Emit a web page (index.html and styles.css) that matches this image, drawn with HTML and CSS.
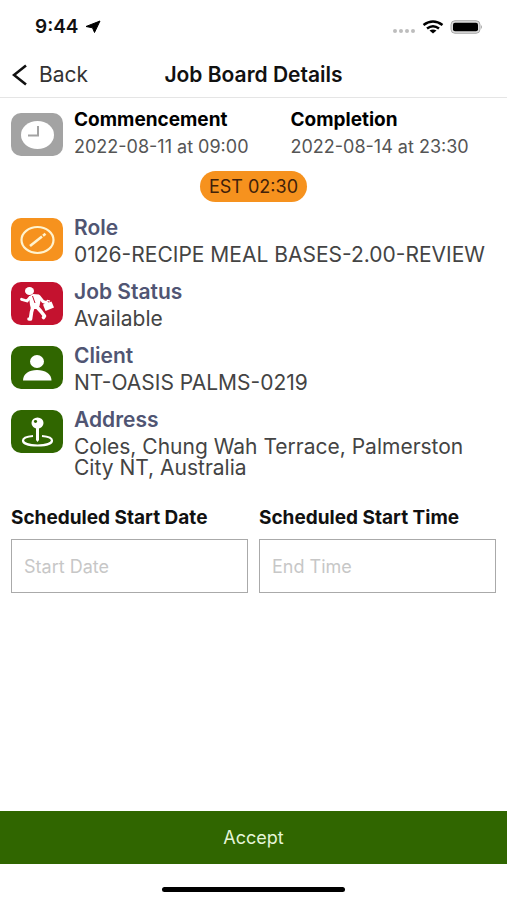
FILE: index.html
```
<!DOCTYPE html>
<html lang="en">
<head>
<meta charset="utf-8">
<meta name="viewport" content="width=device-width, initial-scale=1">
<title>Job Board Details</title>
<link rel="stylesheet" href="styles.css">
</head>
<body>
<div class="screen">
  <div class="status">
    <div class="status-left">
      <span class="clock">9:44</span>
      <svg width="16" height="14" viewBox="0 0 16 14" aria-hidden="true"><path d="M15 1 9.500 12.500 7.500 7.800 1 6.500Z" stroke="#000" stroke-linejoin="round"/></svg>
    </div>
    <div class="status-right">
      <svg width="24" height="6" viewBox="0 0 24 6" fill="#bdbdbd" aria-hidden="true"><circle cx="3" cy="3" r="2"/><circle cx="9" cy="3" r="2"/><circle cx="15" cy="3" r="2"/><circle cx="21" cy="3" r="2"/></svg>
      <svg class="wifi" width="22" height="14" viewBox="0 0 22 14" fill="none" stroke="#000" stroke-width="2.500" aria-hidden="true"><path d="M1.500 5Q11-2 20.500 5M5 8.500Q11 4 17 8.500"/><path d="M7.500 10.500Q11 8.300 14.500 10.500L11 13.500Z" fill="#000" stroke="none"/></svg>
      <svg width="33" height="14" viewBox="0 0 33 14" aria-hidden="true"><rect x="1" y=".7" width="29" height="12.600" rx="4" fill="#ddd" stroke="#aaa"/><rect x="3" y="2.800" width="25" height="8.400" rx="2"/><path d="M31 5Q33 7 31 9Z" fill="#aaa"/></svg>
    </div>
  </div>
  <header class="nav">
    <button class="back" type="button">
      <svg width="16" height="22" viewBox="0 0 16 22" fill="none" stroke="#111" stroke-width="2.600" aria-hidden="true"><path d="M14 1.500 2 11l12 9.500"/></svg>
      Back
    </button>
    <h1>Job Board Details</h1>
  </header>
  <main>
    <section class="row times">
      <svg class="tile" viewBox="0 0 52 43" aria-hidden="true"><rect width="52" height="43" rx="10" fill="#a3a3a3"/><ellipse cx="26.500" cy="22" rx="16.500" ry="14" fill="#fff"/><path d="M27 13v9.500H17" fill="none" stroke="#a3a3a3" stroke-width="2"/></svg>
      <div class="time"><h2>Commencement</h2><p>2022-08-11 at 09:00</p></div>
      <div class="time"><h2>Completion</h2><p>2022-08-14 at 23:30</p></div>
    </section>
    <div class="estimate"><span>EST 02:30</span></div>
    <section class="row">
      <svg class="tile" viewBox="0 0 52 43" aria-hidden="true"><rect width="52" height="43" rx="10" fill="#f6921e"/><ellipse cx="26.500" cy="22" rx="16" ry="13" fill="none" stroke="#fff3cf" stroke-width="2.200"/><path d="m19 28 12-9.500" stroke="#fff3cf" stroke-width="2.600"/><path d="m32 17.700 2.500-2" stroke="#fff3cf" stroke-width="2.600"/></svg>
      <div class="detail"><h2>Role</h2><p>0126-RECIPE MEAL BASES-2.00-REVIEW</p></div>
    </section>
    <section class="row">
      <svg class="tile" viewBox="0 0 52 43" aria-hidden="true"><rect width="52" height="43" rx="10" fill="#c4122f"/><g fill="none" stroke="#fff" stroke-linecap="round" stroke-linejoin="round"><path d="m19 15.500-3 3.500-5.500-1.700" stroke-width="2.800"/><path d="m28 14.500 4 5 4 1.500" stroke-width="3"/><path d="m22 25-1.500 5-1 7h-1.500" stroke-width="3.600"/><path d="m26 25 4 4.500 3.500 4.500-1 1.500" stroke-width="3.600"/></g><g fill="#fff"><ellipse cx="18.500" cy="9" rx="4.500" ry="4"/><path d="m18 14.500 4-2.500 6 .5 2 3.500-1.500 8-2.500 3-6 0-1-4Z"/><path d="m32 22.500 8.500-3 2.500 6-8.500 3.500Z"/></g><path d="m34.500 20.500 2-2 2.500.7" fill="none" stroke="#fff" stroke-width="1.200"/><path d="m21.500 14 2.500 7" stroke="#c4122f"/></svg>
      <div class="detail"><h2>Job Status</h2><p>Available</p></div>
    </section>
    <section class="row">
      <svg class="tile" viewBox="0 0 52 43" aria-hidden="true"><rect width="52" height="43" rx="10" fill="#306600"/><ellipse cx="26" cy="15.500" rx="7" ry="6.500" fill="#fff"/><path d="M12 34.500C12 28 18 24 26 24s14.500 4 14.500 10.500Z" fill="#fff"/></svg>
      <div class="detail"><h2>Client</h2><p>NT-OASIS PALMS-0219</p></div>
    </section>
    <section class="row">
      <svg class="tile" viewBox="0 0 52 43" aria-hidden="true"><rect width="52" height="43" rx="10" fill="#306600"/><path d="M22 26C15 26.500 12 28.500 12 30.500c0 3 6 5 14.500 5S41 33.500 41 30.500c0-2-3-4-10-4.500" fill="none" stroke="#fff" stroke-width="2.200"/><path d="M25 17h3v13l-1.500 2-1.500-2Z" fill="#fff"/><ellipse cx="26.500" cy="13" rx="6" ry="5.500" fill="#fff"/><ellipse cx="24.500" cy="11.500" rx="1.600" ry="1.400" fill="#306600"/></svg>
      <div class="detail"><h2>Address</h2><p>Coles, Chung Wah Terrace, Palmerston City NT, Australia</p></div>
    </section>
    <form class="schedule" id="schedule">
      <div class="field"><label for="start-date">Scheduled Start Date</label><input id="start-date" type="text" placeholder="Start Date"></div>
      <div class="field"><label for="start-time">Scheduled Start Time</label><input id="start-time" type="text" placeholder="End Time"></div>
    </form>
  </main>
  <button class="accept" type="submit" form="schedule">Accept</button>
  <div class="home"></div>
</div>
</body>
</html>
```
FILE: styles.css
```
* { box-sizing: border-box; }
body { margin: 0; background: #fff; color: #444; font-family: Inter, "Liberation Sans", sans-serif; }
h1, h2, p { margin: 0; }
button, input { font-family: inherit; }
svg { display: block; flex: none; }
.screen { min-height: 100vh; display: flex; flex-direction: column; }
.status { display: flex; justify-content: space-between; align-items: center; height: 54px; padding: 0 24px 0 35px; color: #111; }
.status-left, .status-right { display: flex; align-items: center; gap: 6px; }
.status-right { align-items: flex-end; }
.clock { font-size: 19px; line-height: 20px; font-weight: 600; }
.nav { display: grid; grid-template-columns: 1fr auto 1fr; align-items: center; height: 44px; padding: 0 12px 2px; border-bottom: 1px solid #e5e5e5; }
.nav h1 { font-size: 21px; line-height: 24px; font-weight: 600; color: #111; }
.back { justify-self: start; display: flex; align-items: center; gap: 11px; padding: 0; border: 0; background: none; font-size: 21px; line-height: 24px; color: #333; }
main { flex: 1; padding: 9px 11px 0; }
.row { display: flex; gap: 11px; min-height: 64px; }
.tile { width: 52px; height: 43px; margin-top: 3px; }
.detail { flex: 1; padding-top: 1px; }
.detail h2 { font-size: 21px; line-height: 24px; font-weight: 600; color: #505573; }
.detail p { margin-top: 4px; font-size: 21px; line-height: 21px; }
.times .tile { margin-top: 6px; }
.time { flex: 1; padding-top: 1px; }
.time h2 { font-size: 19px; line-height: 24px; font-weight: 700; color: #000; }
.time p { margin-top: 4px; font-size: 18px; line-height: 21px; color: #555; }
.estimate { display: flex; justify-content: center; height: 44px; }
.estimate span { height: 31px; padding: 0 9px; border-radius: 16px; background: #f6921e; color: #40210a; font-size: 18px; line-height: 31px; }
.schedule { display: flex; gap: 11px; padding-top: 29px; }
.field { flex: 1; min-width: 0; }
.field label { display: block; font-size: 19px; line-height: 22px; font-weight: 700; color: #111; white-space: nowrap; }
.field input { display: block; width: 100%; height: 54px; margin-top: 10px; padding: 0 12px; border: 1px solid #aaa; border-radius: 0; background: #fff; font-size: 18px; color: #333; }
.field input::placeholder { color: #c7c7c7; opacity: 1; }
.accept { height: 53px; border: 0; background: #306600; color: #e4f5d8; font-size: 18px; }
.home { width: 36%; height: 5px; margin: 23px auto 8px; border-radius: 3px; background: #000; }
```
